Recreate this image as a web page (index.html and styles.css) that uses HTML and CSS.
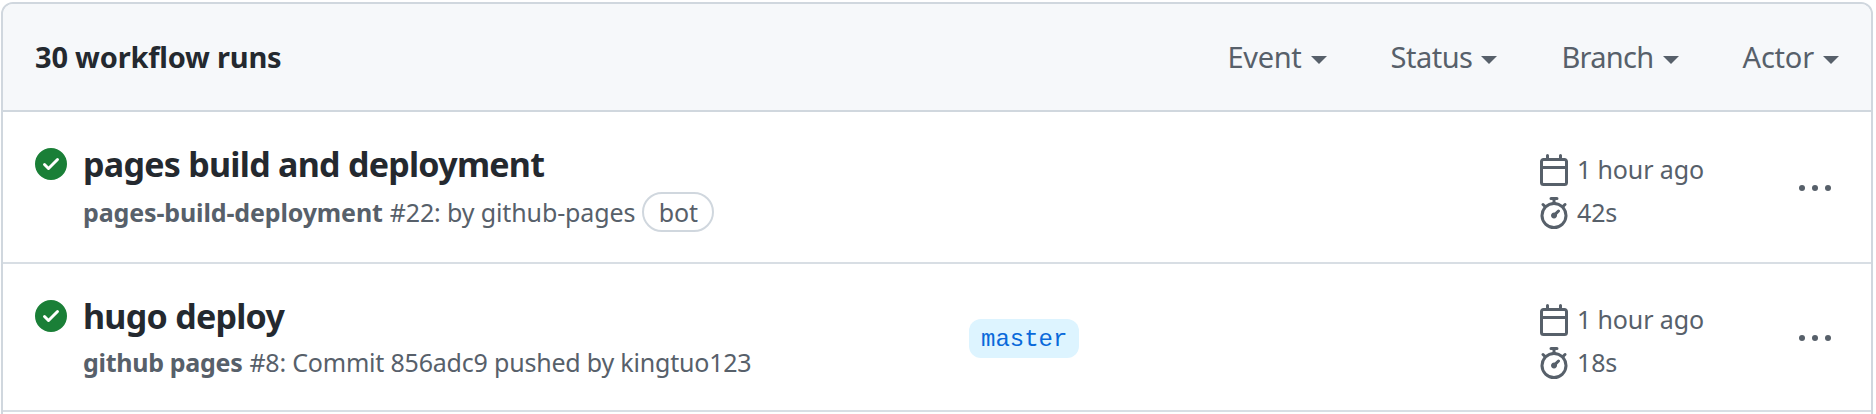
FILE: index.html
```html
<!DOCTYPE html>
<html lang="en">
<head>
<meta charset="utf-8">
<title>Workflow runs</title>
<link rel="stylesheet" href="styles.css">
</head>
<body>
<svg class="sprite" aria-hidden="true">
<symbol id="check" viewBox="0 0 16 16"><path d="M8 16A8 8 0 1 1 8 0a8 8 0 0 1 0 16Zm3.78-9.72a.751.751 0 0 0-.018-1.042.751.751 0 0 0-1.042-.018L6.75 9.19 5.28 7.72a.751.751 0 0 0-1.042.018.751.751 0 0 0-.018 1.042l2 2a.75.75 0 0 0 1.06 0Z"/></symbol>
<symbol id="calendar" viewBox="0 0 16 16"><path d="M4.75 0a.75.75 0 0 1 .75.75V2h5V.75a.75.75 0 0 1 1.5 0V2h1.25c.966 0 1.75.784 1.75 1.75v10.5A1.75 1.75 0 0 1 13.25 16H2.75A1.75 1.75 0 0 1 1 14.25V3.75C1 2.784 1.784 2 2.75 2H4V.75A.75.75 0 0 1 4.75 0ZM2.5 7.5v6.75c0 .138.112.25.25.25h10.5a.25.25 0 0 0 .25-.25V7.5Zm10.75-4H2.75a.25.25 0 0 0-.25.25V6h11V3.75a.25.25 0 0 0-.25-.25Z"/></symbol>
<symbol id="stopwatch" viewBox="0 0 16 16"><path d="M5.75.75A.75.75 0 0 1 6.5 0h3a.75.75 0 0 1 0 1.5h-.75v1l-.001.041a6.724 6.724 0 0 1 3.464 1.435l.007-.006.75-.75a.749.749 0 0 1 1.275.326.749.749 0 0 1-.215.734l-.75.75-.006.007a6.75 6.75 0 1 1-10.548 0L2.72 5.03l-.75-.75a.751.751 0 0 1 .018-1.042.751.751 0 0 1 1.042-.018l.75.75.007.006A6.72 6.72 0 0 1 7.25 2.541V1.5H6.5a.75.75 0 0 1-.75-.75ZM8 14.5a5.25 5.25 0 1 0-.001-10.501A5.25 5.25 0 0 0 8 14.5Zm.389-6.7 1.33-1.33a.75.75 0 1 1 1.061 1.06L9.45 8.861A1.503 1.503 0 0 1 8 10.75a1.499 1.499 0 1 1 .389-2.95Z"/></symbol>
<symbol id="kebab" viewBox="0 0 16 16"><circle cx="1.5" cy="7.5" r="1.5"/><circle cx="8" cy="7.5" r="1.5"/><circle cx="14.5" cy="7.5" r="1.5"/></symbol>
</svg>
<main class="panel">
<header class="panel-header">
<h1 class="count">30 workflow runs</h1>
<nav class="filters">
<a class="filter">Event<i class="caret"></i></a>
<a class="filter filter-status">Status<i class="caret"></i></a>
<a class="filter filter-branch">Branch<i class="caret"></i></a>
<a class="filter filter-actor">Actor<i class="caret"></i></a>
</nav>
</header>
<section class="run run-first">
<svg class="icon success"><use href="#check"/></svg>
<div class="info">
<h2 class="title">pages build and deployment</h2>
<p class="sub"><b>pages-build-deployment</b><span>#22: by github-pages</span><span class="label">bot</span></p>
</div>
<div class="branch-cell"></div>
<div class="meta">
<div class="meta-item"><svg class="icon"><use href="#calendar"/></svg><span>1 hour ago</span></div>
<div class="meta-item"><svg class="icon"><use href="#stopwatch"/></svg><span>42s</span></div>
</div>
<svg class="icon kebab"><use href="#kebab"/></svg>
</section>
<section class="run">
<svg class="icon success"><use href="#check"/></svg>
<div class="info">
<h2 class="title">hugo deploy</h2>
<p class="sub sub-commit"><b>github pages</b><span>#8: Commit 856adc9 pushed by kingtuo123</span></p>
</div>
<div class="branch-cell"><a class="branch">master</a></div>
<div class="meta">
<div class="meta-item"><svg class="icon"><use href="#calendar"/></svg><span>1 hour ago</span></div>
<div class="meta-item"><svg class="icon"><use href="#stopwatch"/></svg><span>18s</span></div>
</div>
<svg class="icon kebab"><use href="#kebab"/></svg>
</section>
</main>
</body>
</html>
```
FILE: styles.css
```css
* { box-sizing: border-box; margin: 0; }
body { height: 414px; overflow: hidden; padding: 2px 3px 0 1px; background: #fff; color: #57606a; font-family: "Noto Sans", sans-serif; font-size: 25px; letter-spacing: -0.13px; }
.sprite { display: none; }
.panel { height: 430px; border: 2px solid #d0d7de; border-radius: 12px; overflow: hidden; }
.panel-header { display: flex; justify-content: space-between; height: 108px; padding: 0 32px; background: #f6f8fa; border-bottom: 2px solid #d0d7de; }
.count { font-size: 29px; font-weight: 700; line-height: 106px; letter-spacing: -0.2px; color: #24292f; }
.filters { display: flex; gap: 64px; font-size: 29px; line-height: 106px; letter-spacing: -0.3px; }
.filter { display: flex; align-items: center; gap: 9px; }
.filter-status { letter-spacing: -0.5px; }
.filter-branch { letter-spacing: -0.7px; }
.filter-actor { letter-spacing: -0.2px; }
.caret { border: 8px solid transparent; border-top-color: currentColor; border-bottom: 0; margin-top: 6px; }
.icon { display: block; width: 32px; height: 32px; fill: currentColor; flex: none; }
.run { display: grid; grid-template-columns: 48px 886px 569px 261px 32px; height: 148px; padding: 28px 0 0 32px; border-bottom: 2px solid #d8dee4; white-space: nowrap; }
.run-first { height: 152px; }
.success { color: #1a7f37; margin-top: 8px; }
.title { font-size: 34px; font-weight: 700; line-height: 48px; letter-spacing: -0.73px; color: #24292f; }
.sub { display: flex; gap: 7px; margin-top: 2px; line-height: 40px; }
.run-first .sub { margin-top: 4px; }
.sub-commit { letter-spacing: -0.2px; }
.sub b { font-weight: 700; }
.sub-commit b { letter-spacing: -0.3px; }
.label { height: 40px; padding: 0 14.5px; border: 2px solid #d0d7de; border-radius: 20px; line-height: 36px; }
.branch-cell { display: flex; align-items: flex-start; padding-top: 27px; }
.branch { height: 39px; padding: 0 12px; border-radius: 12px; background: #ddf4ff; color: #0969da; font: 24px/41px "Liberation Mono", monospace; letter-spacing: 0; }
.meta { padding-top: 6px; }
.run-first .meta { padding-top: 8px; }
.meta-item { display: flex; gap: 7px; height: 43px; line-height: 43px; }
.meta-item .icon { margin-top: 6px; }
.kebab { margin-top: 31px; }
.run-first .kebab { margin-top: 33px; }
```
